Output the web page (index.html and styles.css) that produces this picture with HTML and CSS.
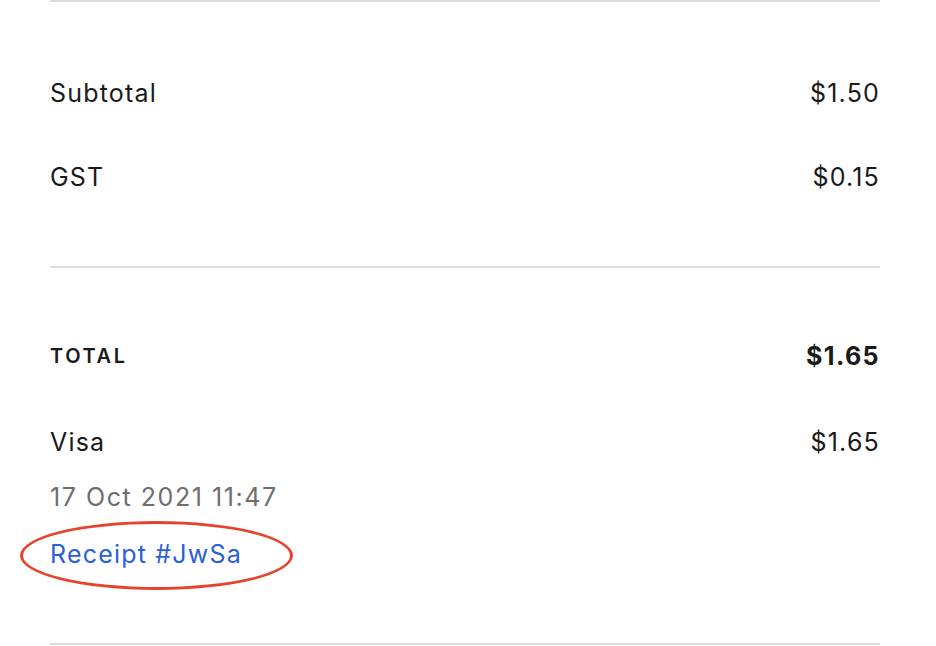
FILE: index.html
```html
<!DOCTYPE html>
<html lang="en">
<head>
    <meta charset="UTF-8">
    <meta name="viewport" content="width=device-width, initial-scale=1.0">
    <title>Receipt</title>
    <link rel="stylesheet" href="styles.css">
</head>
<body>
    <div class="container">
        <div class="section">
            <div class="row">
                <span>Subtotal</span>
                <span>$1.50</span>
            </div>
            <div class="row gst">
                <span>GST</span>
                <span>$0.15</span>
            </div>
        </div>

        <div class="section payment">
            <div class="row total">
                <span class="total-label">TOTAL</span>
                <span class="total-amount">$1.65</span>
            </div>
            <div class="row visa">
                <span>Visa</span>
                <span>$1.65</span>
            </div>
            <div class="date">17 Oct 2021 11:47</div>
            <div class="receipt">
                <a href="#" class="receipt-link">Receipt #JwSa</a>
                <span class="circle"></span>
            </div>
        </div>
        <div class="section end"></div>
    </div>
</body>
</html>
```

FILE: styles.css
```css
body {
    font-family: Inter, "Noto Sans", sans-serif;
    margin: 0;
    background: white;
    color: #1a1a1a;
}
.container {
    padding: 0 56px 0 50px;
}
.section {
    border-top: 2px solid #dcdcdc;
    padding: 73px 0 71px;
}
.section.payment {
    padding: 70px 0 71px;
}
.section.end {
    padding: 0;
}
.row {
    display: flex;
    justify-content: space-between;
    align-items: center;
    height: 36px;
    font-size: 25px;
    letter-spacing: 1.2px;
}
.row.gst {
    margin-top: 48px;
}
.total-label {
    font-size: 20px;
    font-weight: 600;
    letter-spacing: 2.6px;
}
.total-amount {
    font-weight: 700;
    letter-spacing: 1.4px;
}
.row.visa {
    margin-top: 50px;
}
.date {
    margin-top: 19px;
    height: 36px;
    line-height: 36px;
    font-size: 25px;
    letter-spacing: 1.55px;
    color: #6e6e6e;
}
.receipt {
    position: relative;
    margin-top: 21px;
    height: 36px;
    line-height: 36px;
    font-size: 25px;
    letter-spacing: 1.2px;
}
.receipt-link {
    color: #2b5fd9;
    text-decoration: none;
}
.circle {
    position: absolute;
    left: -30px;
    top: -15px;
    width: 267px;
    height: 63px;
    border: 3px solid #e6432a;
    border-radius: 50%;
}
```
